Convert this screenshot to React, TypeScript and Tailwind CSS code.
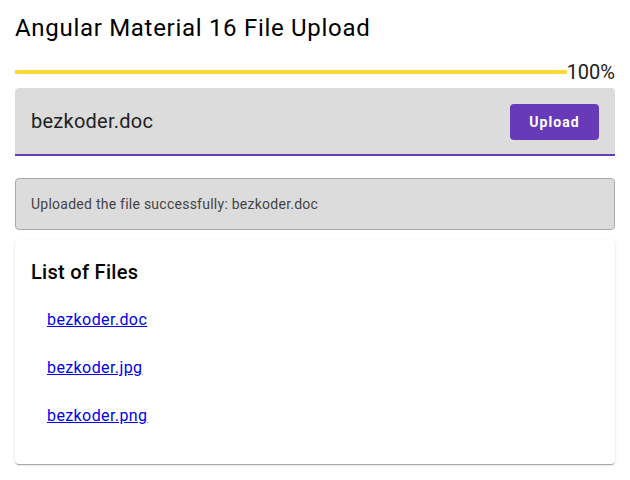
import React from "react";

export default function App() {
  const files = ["bezkoder.doc", "bezkoder.jpg", "bezkoder.png"];
  return (
    <div className="min-h-screen bg-white px-[15px] pt-[12px] font-['Roboto',sans-serif] text-[#212121]">
      <h1 className="text-[24px] leading-[32px] font-normal tracking-[0.7px] text-black">
        Angular Material 16 File Upload
      </h1>
      <div className="mt-[18px] flex items-center">
        <div className="h-[4px] flex-1 bg-[#fdd835]" />
        <span className="text-[20px] leading-[20px] text-[#212121]">100%</span>
      </div>
      <div className="mt-[6px] flex h-[68px] items-center justify-between rounded-t-[4px] border-b-2 border-[#673ab7] bg-[#dcdcdc] pl-[16px] pr-[16px]">
        <span className="text-[20px] leading-[24px] tracking-[0.25px] text-[#222]">bezkoder.doc</span>
        <button className="mt-[2px] h-[36px] w-[89px] rounded-[4px] bg-[#673ab7] text-[14px] font-bold tracking-[1.1px] text-white">
          Upload
        </button>
      </div>
      <div className="mt-[22px] flex h-[52px] items-center rounded-[4px] border border-[#a9a9a9] bg-[#dcdcdc] px-[15px] text-[14px] tracking-[0.25px] text-[#444]">
        Uploaded the file successfully: bezkoder.doc
      </div>
      <div className="mt-[10px] h-[224px] rounded-[4px] bg-white px-[16px] pt-[19px] shadow-[0_2px_1px_-1px_rgba(0,0,0,0.2),0_1px_1px_0_rgba(0,0,0,0.14),0_1px_3px_0_rgba(0,0,0,0.12)]">
        <h2 className="text-[20px] leading-[26px] font-medium tracking-[0.3px] text-black">List of Files</h2>
        <ul className="mt-[11px] flex flex-col pl-[16px]">
          {files.map((f) => (
            <li key={f} className="flex h-[48px] items-center">
              <a href="#" className="text-[16px] tracking-[0.4px] text-[#0000ee] underline">
                {f}
              </a>
            </li>
          ))}
        </ul>
      </div>
    </div>
  );
}
